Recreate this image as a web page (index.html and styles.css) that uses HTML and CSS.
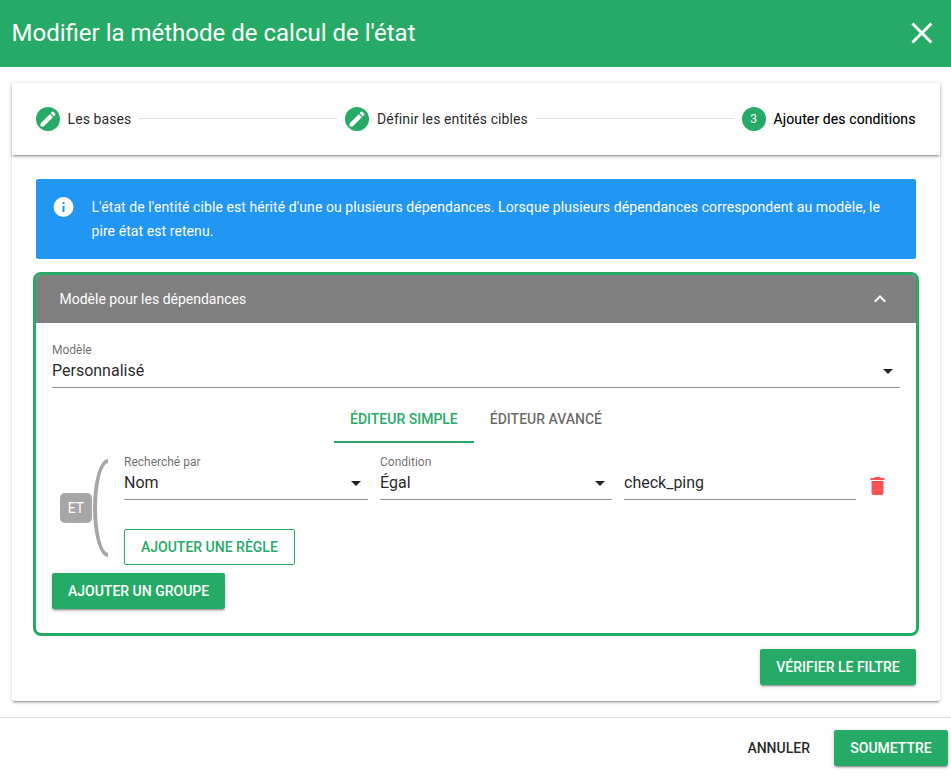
FILE: index.html
```html
<!DOCTYPE html>
<html lang="fr">
<head>
<meta charset="utf-8">
<title>Modifier la méthode de calcul de l'état</title>
<link rel="stylesheet" href="styles.css">
</head>
<body>
<header class="toolbar">
  <h1 class="toolbar-title">Modifier la méthode de calcul de l'état</h1>
  <svg class="close" viewBox="0 0 24 24"><path d="M19 6.41L17.59 5 12 10.59 6.41 5 5 6.41 10.59 12 5 17.59 6.41 19 12 13.41 17.59 19 19 17.59 13.41 12z"/></svg>
</header>
<main class="card">
  <nav class="steps">
    <div class="step">
      <span class="dot"><svg viewBox="0 0 24 24"><path d="M20.71 7.04c.39-.39.39-1.04 0-1.41l-2.34-2.34c-.37-.39-1.02-.39-1.41 0l-1.84 1.83 3.75 3.75M3 18.5V20q0 1 1 1h2.75L17.81 9.93l-3.75-3.75L3.6 16.65q-.6.6-.6 1.85z"/></svg></span>
      <span>Les bases</span>
    </div>
    <hr class="link">
    <div class="step">
      <span class="dot"><svg viewBox="0 0 24 24"><path d="M20.71 7.04c.39-.39.39-1.04 0-1.41l-2.34-2.34c-.37-.39-1.02-.39-1.41 0l-1.84 1.83 3.75 3.75M3 18.5V20q0 1 1 1h2.75L17.81 9.93l-3.75-3.75L3.6 16.65q-.6.6-.6 1.85z"/></svg></span>
      <span>Définir les entités cibles</span>
    </div>
    <hr class="link">
    <div class="step active">
      <span class="dot">3</span>
      <span>Ajouter des conditions</span>
    </div>
  </nav>
  <div class="content">
    <div class="alert">
      <svg class="info" viewBox="0 0 24 24"><path d="M13 9h-2V7h2m0 10h-2v-6h2m-1-9a10 10 0 1 0 0 20 10 10 0 0 0 0-20z"/></svg>
      <p>L'état de l'entité cible est hérité d'une ou plusieurs dépendances. Lorsque plusieurs dépendances correspondent au modèle, le pire état est retenu.</p>
    </div>
    <section class="panel">
      <div class="panel-head">
        <span>Modèle pour les dépendances</span>
        <svg class="chevron" viewBox="0 0 24 24"><path d="M7.41 15.41L12 10.83l4.59 4.58L18 14l-6-6-6 6z"/></svg>
      </div>
      <div class="panel-body">
        <div class="field">
          <label>Modèle</label>
          <div class="value">Personnalisé<svg class="caret" viewBox="0 0 24 24"><path d="M7 10l5 5 5-5z"/></svg></div>
        </div>
        <div class="tabs">
          <span class="tab selected">Éditeur simple</span>
          <span class="tab">Éditeur avancé</span>
        </div>
        <div class="group">
          <span class="operator">ET</span>
          <span class="bracket"></span>
          <div class="rules">
            <div class="rule">
              <div class="field">
                <label>Recherché par</label>
                <div class="value">Nom<svg class="caret" viewBox="0 0 24 24"><path d="M7 10l5 5 5-5z"/></svg></div>
              </div>
              <div class="field">
                <label>Condition</label>
                <div class="value">Égal<svg class="caret" viewBox="0 0 24 24"><path d="M7 10l5 5 5-5z"/></svg></div>
              </div>
              <div class="field">
                <div class="value">check_ping</div>
              </div>
              <svg class="trash" viewBox="0 0 24 24"><path d="M19 4h-3.5l-1-1h-5l-1 1H5v2h14M6 19a2 2 0 0 0 2 2h8a2 2 0 0 0 2-2V7H6v12z"/></svg>
            </div>
            <button class="btn outlined">Ajouter une règle</button>
          </div>
        </div>
        <button class="btn raised">Ajouter un groupe</button>
      </div>
    </section>
    <div class="verify"><button class="btn raised">Vérifier le filtre</button></div>
  </div>
</main>
<footer class="actions">
  <button class="btn">Annuler</button>
  <button class="btn raised">Soumettre</button>
</footer>
</body>
</html>
```
FILE: styles.css
```css
* { box-sizing: border-box; }
body {
  margin: 0;
  height: 778px;
  overflow: hidden;
  background: #fff;
  color: rgba(0, 0, 0, .87);
  font: 14px/24px Roboto, sans-serif;
}
svg { display: block; fill: currentColor; flex: none; }
.toolbar {
  height: 67px;
  padding: 0 11.5px 2px 11.5px;
  display: flex;
  align-items: center;
  justify-content: space-between;
  background: #26ab66;
  color: #fff;
}
.toolbar-title { margin: 0; font-size: 24px; font-weight: 400; line-height: 32px; }
.close { width: 36px; height: 36px; margin-top: 1px; transform: translateX(-.1px); }
.card {
  margin: 16px 11px 0 12px;
  height: 618px;
  border-radius: 2px;
  box-shadow: 0 3px 1px -2px rgba(0, 0, 0, .2), 0 2px 2px rgba(0, 0, 0, .14), 0 1px 5px rgba(0, 0, 0, .12);
}
.steps {
  height: 72px;
  padding: 0 24.5px 0 24px;
  display: flex;
  align-items: center;
  box-shadow: 0 3px 1px -2px rgba(0, 0, 0, .2), 0 2px 2px rgba(0, 0, 0, .14), 0 1px 5px rgba(0, 0, 0, .12);
}
.step { display: flex; align-items: center; gap: 8px; white-space: nowrap; letter-spacing: .1px; }
.step:first-child { gap: 7.5px; }
.step.active { color: #000; text-shadow: 0 0 0 rgba(0, 0, 0, .35); }
.dot {
  width: 24px;
  height: 24px;
  border-radius: 50%;
  display: grid;
  place-items: center;
  background: #26ab66;
  color: #fff;
  font-size: 12px;
  text-shadow: none;
}
.dot svg { width: 20px; height: 20px; }
.link { flex: 1; height: 1px; margin: 0 8px 1px; border: 0; background: #e0e0e0; }
.content { padding: 24px 24px 0; }
.alert {
  height: 80px;
  padding: 16px 16px 16px 15.5px;
  display: flex;
  gap: 16px;
  border-radius: 2px;
  background: #2196f3;
  color: #fff;
}
.alert p { margin: 0; letter-spacing: .078px; }
.info { width: 24px; height: 24px; transform: translateX(-.5px); }
.panel {
  height: 364px;
  margin: 13px -3px 0;
  border: 3px solid #26ab66;
  border-radius: 8px;
  overflow: hidden;
}
.panel-head {
  height: 48px;
  padding: 0 24px 0 23.5px;
  display: flex;
  align-items: center;
  justify-content: space-between;
  background: #808080;
  color: #fff;
}
.chevron { width: 24px; height: 24px; }
.panel-body { padding: 19px 16px 0; }
.field {
  height: 46px;
  display: flex;
  flex-direction: column;
  justify-content: flex-end;
  border-bottom: 1px solid #949494;
}
.field label { font-size: 12px; line-height: 16px; color: rgba(0, 0, 0, .6); }
.value {
  height: 29px;
  padding-bottom: 3px;
  display: flex;
  align-items: center;
  justify-content: space-between;
  font-size: 16px;
}
.caret { width: 24px; height: 24px; margin-top: -1px; }
.tabs { margin-top: 7px; height: 48px; display: flex; justify-content: center; }
.tab {
  padding: 0 16px;
  border-bottom: 2px solid transparent;
  font-weight: 500;
  line-height: 48px;
  text-transform: uppercase;
  color: rgba(0, 0, 0, .6);
}
.tab.selected { color: #26ab66; border-color: #26ab66; }
.group { height: 130px; padding: 11px 8px 0; display: flex; }
.operator {
  width: 32px;
  height: 30px;
  margin-top: 39px;
  border-radius: 5px;
  background: #a6a6a6;
  color: #fff;
  line-height: 30px;
  text-align: center;
}
.bracket {
  width: 15px;
  height: 98px;
  margin: 5px 16px 0 1px;
  border: 4px solid #a6a6a6;
  border-right: 0;
  border-radius: 15px 0 0 15px / 49px 0 0 49px;
}
.rules { flex: 1; }
.rule {
  display: grid;
  grid-template-columns: 244px 232px 232px 24px;
  column-gap: 12px;
  align-items: end;
  margin-bottom: 29px;
}
.trash { width: 24px; height: 24px; margin: 0 0 2px -3px; transform: translateX(.5px); color: #ff5252; }
.btn {
  height: 36px;
  padding: 0 16px;
  display: block;
  border: 0;
  border-radius: 2px;
  background: none;
  color: rgba(0, 0, 0, .87);
  font: 500 14px/36px Roboto, sans-serif;
  text-transform: uppercase;
}
.btn.outlined { border: 1px solid #26ab66; line-height: 34px; color: #26ab66; }
.btn.raised {
  background: #26ab66;
  color: #fff;
  box-shadow: 0 3px 1px -2px rgba(0, 0, 0, .2), 0 2px 2px rgba(0, 0, 0, .14), 0 1px 5px rgba(0, 0, 0, .12);
}
.verify { margin-top: 13px; display: flex; justify-content: flex-end; }
.verify .btn { width: 156px; }
.actions {
  height: 61px;
  margin-top: 16px;
  padding: 12px 3px 0;
  display: flex;
  justify-content: flex-end;
  gap: 8px;
  border-top: 1px solid #e0e0e0;
}
.actions .raised { width: 114px; }
```
